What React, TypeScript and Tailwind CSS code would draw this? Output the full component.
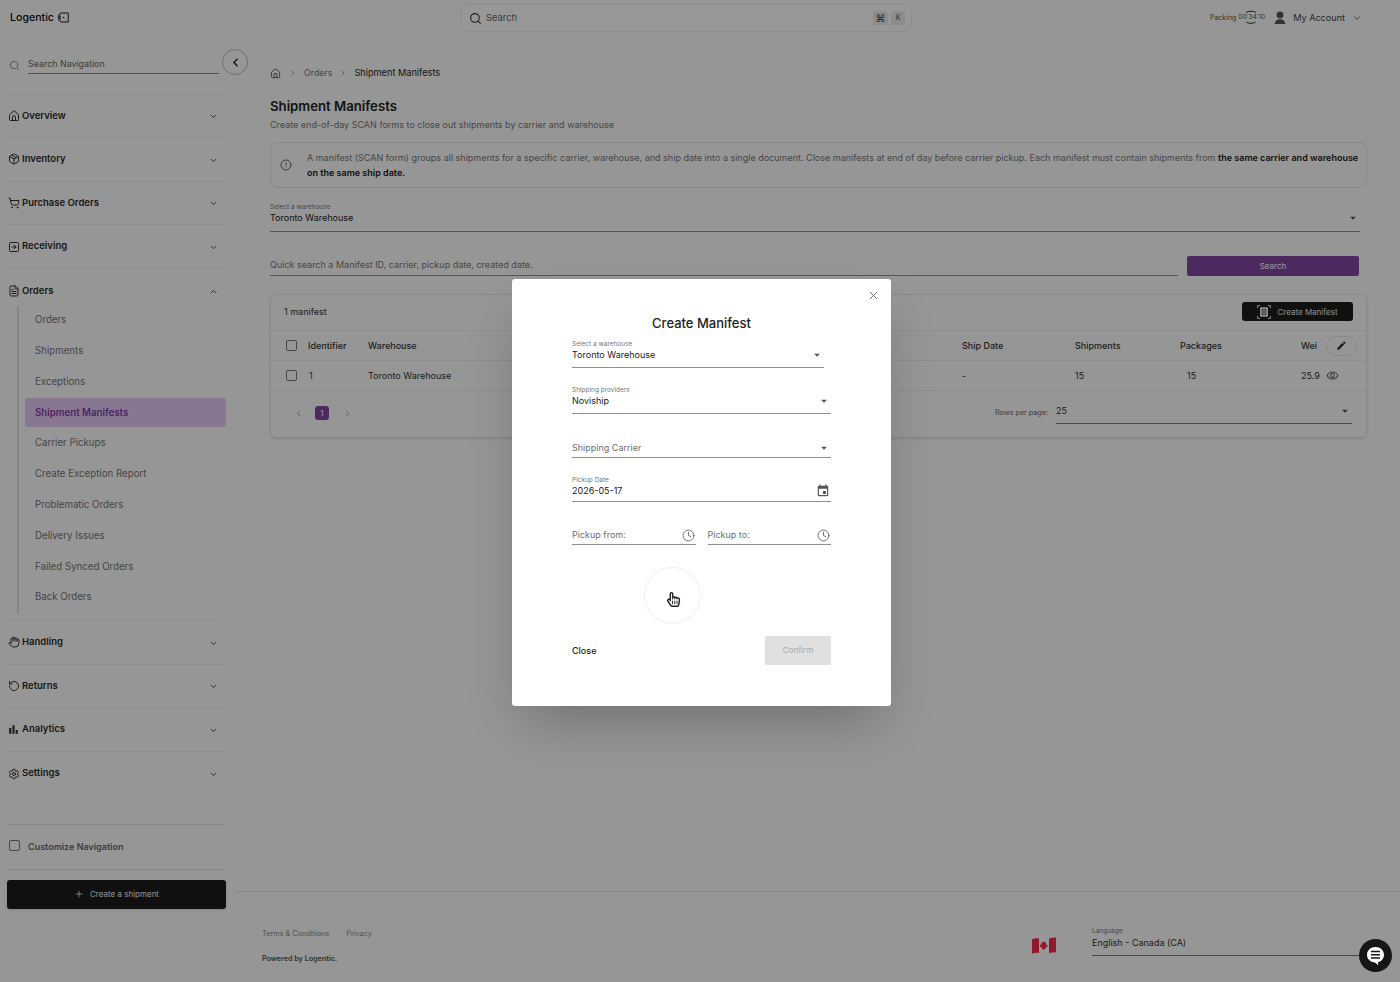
import React from "react";
import {
  Home, Package, ShoppingCart, SquareArrowRight, FileText, Hand, RotateCcw, Settings,
  ChevronDown, ChevronUp, ChevronLeft, ChevronRight, Search, CircleAlert, Clock, X, Plus,
} from "lucide-react";
import { MdArrowDropDown, MdEdit, MdEvent, MdOutlineRemoveRedEye, MdBarChart } from "react-icons/md";
import { FaRegHandPointer } from "react-icons/fa";

const subItems = ["Orders", "Shipments", "Exceptions", "Shipment Manifests", "Carrier Pickups", "Create Exception Report", "Problematic Orders", "Delivery Issues", "Failed Synced Orders", "Back Orders"];

function NavHead({ icon, label, open, last }: { icon: React.ReactNode; label: string; open?: boolean; last?: boolean }) {
  return (
    <div className={`h-[43.6px] ml-[7px] w-[219px] flex items-center pr-[8px] ${last ? "" : "border-b border-[#ececec]"}`}>
      <span className="w-[13px] flex justify-center text-[#333]">{icon}</span>
      <span className="ml-[2px] text-[9.500px] font-semibold text-[#2b2b2b]">{label}</span>
      <span className="ml-auto mt-[2px] text-[#444]">
        {open ? <ChevronUp size={9} strokeWidth={2.5} /> : <ChevronDown size={9} strokeWidth={2.5} />}
      </span>
    </div>
  );
}

function Box() {
  return <span className="block w-[11px] h-[11px] border-[1.5px] border-[#777] rounded-[2px]" />;
}

function Arrow() {
  return <MdArrowDropDown size={14} className="text-[#555]" />;
}

function Logo() {
  return (
    <svg width="11" height="11" viewBox="0 0 12 12" fill="none" stroke="#222" strokeWidth="1.1">
      <path d="M3.2 1h7.4c.4 0 .6.2.6.6v8.8c0 .4-.2.6-.6.6H3.2L.8 8.2V3.8L3.2 1z" />
      <circle cx="6" cy="6" r="0.9" fill="#222" stroke="none" />
      <path d="M3 4.2 1.4 6 3 7.800" />
    </svg>
  );
}

function Flag() {
  return (
    <svg width="24" height="17" viewBox="0 0 24 17">
      <path d="M0 2.2C3 1.2 5 .9 7 1.4v14.6c-2-.5-4-.2-7 .8V2.2z" fill="#f02a48" />
      <path d="M7 1.4c3.5.8 6.500 1 10 .1v14.6c-3.500.9-6.500.7-10-.1V1.4z" fill="#fff" />
      <path d="M17 1.500c2.500-.6 4.500-1 7-.9v14.600c-2.500-.1-4.500.3-7 .9V1.500z" fill="#f02a48" />
      <path d="M12 3.800l1 2 1.300-.4-.5 2.300 1.500-.300-.3 1.200 1 .7-2.800 1.800.3 1.200-1.500-.200V13.500h-.600v-1.400l-1.500.200.3-1.200-2.800-1.800 1-.7-.3-1.200 1.500.300-.5-2.300 1.300.4z" fill="#f02a48" />
    </svg>
  );
}

function ScanDoc() {
  return (
    <svg width="14" height="14" viewBox="0 0 14 14" fill="none" stroke="#e8e8e8" strokeWidth="1">
      <path d="M.6 3V.6H3M11 .6h2.400V3M13.400 11v2.400H11M3 13.400H.6V11" />
      <rect x="3" y="2.200" width="8" height="9.600" rx=".6" fill="#e8e8e8" stroke="none" />
      <path d="M4.500 4.800h5M4.500 7h5M4.500 9.200h5" stroke="#1b1b1b" strokeWidth=".8" />
    </svg>
  );
}

function ChatBubble() {
  return (
    <svg width="19" height="20" viewBox="0 0 19 20">
      <path d="M9.500 1C14.300 1 18 4.400 18 8.800c0 3.600-2.500 6.600-6 7.500l.3 3-3.400-2.800C4.300 16.300 1 13 1 8.800 1 4.400 4.700 1 9.500 1z" fill="#fff" />
      <path d="M5 5.500h9M5 8.800h9M5 12h9" stroke="#161616" strokeWidth="1.400" />
    </svg>
  );
}

function Person() {
  return (
    <svg width="12" height="13" viewBox="0 0 12 13" fill="#555">
      <circle cx="6" cy="4" r="3.400" />
      <path d="M.8 13c0-3 2.300-4.800 5.200-4.800s5.200 1.800 5.200 4.800H.8z" />
    </svg>
  );
}

function Field({ label, value, placeholder, right, className = "" }: { label?: string; value?: string; placeholder?: string; right?: React.ReactNode; className?: string }) {
  return (
    <div className={`border-b border-[#8f8f8f] ${className}`}>
      {label && <div className="text-[6.500px] leading-[11px] -mb-[2px] text-[#777]">{label}</div>}
      <div className="h-[14px] flex items-center justify-between">
        {value ? <span className="text-[9px] leading-[14px] text-[#222]">{value}</span> : <span className="text-[9px] leading-[14px] text-[#6f6f6f]">{placeholder}</span>}
        {right}
      </div>
    </div>
  );
}

export default function App() {
  return (
    <div className="relative w-[1400px] h-[982px] overflow-hidden bg-[#fafafa] flex flex-col font-['Inter',sans-serif] text-[#222]">
      <header className="h-[37px] shrink-0 flex items-center pl-[10px] pr-[38px] border-b border-[#f0f0f0]">
        <div className="w-[451px] flex items-center gap-[4px]">
          <span className="text-[10.600px] font-medium text-[#111]">Logentic</span>
          <Logo />
        </div>
        <div className="w-[451px] h-[28px] rounded-lg border border-[#ebebeb] bg-[#fcfcfc] flex items-center pl-[7px] pr-[6px]">
          <Search size={13} className="text-[#333]" />
          <span className="ml-[4px] text-[9.400px] text-[#666]">Search</span>
          <span className="ml-auto flex gap-[3px]">
            <span className="w-[15px] h-[14px] rounded-[3px] bg-[#e9e9e9] text-[10px] text-[#444] flex items-center justify-center">⌘</span>
            <span className="w-[14px] h-[14px] rounded-[3px] bg-[#e9e9e9] text-[7px] text-[#555] flex items-center justify-center">K</span>
          </span>
        </div>
        <div className="ml-auto flex items-center">
          <span className="text-[7px] text-[#555]">Packing</span>
          <span className="relative ml-[2px] text-[6.500px] text-[#555]">
            00:34:10
            <svg className="absolute left-[5px] -top-[4px]" width="16" height="16" viewBox="0 0 16 16" fill="none" stroke="#333" strokeWidth="1">
              <path d="M3 3.500C5 1.800 11 1.800 13 3.500M3.500 13C6 14.800 10 14.800 12.500 13" />
            </svg>
          </span>
          <span className="ml-[9px]"><Person /></span>
          <span className="ml-[7px] text-[9.100px] text-[#444]">My Account</span>
          <ChevronDown size={10} className="ml-[7px] text-[#555]" />
        </div>
      </header>

      <div className="flex flex-1 min-h-0">
        <aside className="w-[235px] shrink-0 border-r border-[#f2f2f2] flex flex-col relative">
          <div className="h-[56.500px] shrink-0 flex items-start pl-[9px] pr-[15px] pt-[20px]">
            <Search size={11} className="text-[#888] mt-[3px]" />
            <div className="ml-[8px] flex-1 border-b border-[#888] text-[8.900px] leading-[14px] text-[#666] pb-[2px]">Search Navigation</div>
          </div>
          <button className="absolute left-[222px] top-[12px] w-[26px] h-[26px] rounded-full border border-[#bbb] bg-[#fafafa] flex items-center justify-center">
            <ChevronLeft size={13} strokeWidth={2.500} className="text-[#222]" />
          </button>
          <div className="h-[1px] mx-[7px] bg-[#ececec]" />
          <div className="w-[226px]">
            <NavHead icon={<Home size={12} />} label="Overview" />
            <NavHead icon={<Package size={12} />} label="Inventory" />
            <NavHead icon={<ShoppingCart size={12} />} label="Purchase Orders" />
            <NavHead icon={<SquareArrowRight size={12} />} label="Receiving" />
            <NavHead icon={<FileText size={12} />} label="Orders" open last />
            <div className="ml-[17px] border-l-2 border-[#dcdcdc] pl-[6px] flex flex-col -mt-[6.500px]">
              {subItems.map((s) => (
                <div key={s} className={`h-[29px] mb-[1.800px] flex items-center pl-[10px] rounded-[3px] text-[9.700px] ${s === "Shipment Manifests" ? "bg-[#e5c5f2] text-[#7a3fa8] font-semibold" : "text-[#747474]"}`}>
                  {s}
                </div>
              ))}
            </div>
            <div className="h-[1px] mx-[7px] bg-[#ececec] mt-[6px]" />
            <NavHead icon={<Hand size={12} />} label="Handling" />
            <NavHead icon={<RotateCcw size={12} />} label="Returns" />
            <NavHead icon={<MdBarChart size={13} />} label="Analytics" />
            <NavHead icon={<Settings size={12} />} label="Settings" last />
          </div>
          <div className="mt-[29px] mx-[7px] border-t border-b border-[#dfdfdf] h-[46px] w-[219px] flex items-center pl-[2px]">
            <span className="-mt-[3px]"><Box /></span>
            <span className="ml-[8px] -mt-[2px] text-[9px] font-semibold text-[#666]">Customize Navigation</span>
          </div>
          <button className="mt-[10px] ml-[7px] w-[219px] h-[29px] pb-[1px] rounded-[3px] bg-[#1c1c1c] shadow flex items-center justify-center text-[8px] text-[#eee]">
            <Plus size={10} className="mr-[6px]" />Create a shipment
          </button>
        </aside>

        <main className="flex-1 min-w-0 flex flex-col">
          <div className="flex-1 min-h-0 pl-[35px] pr-[33px]">
            <div className="h-[16px] mt-[28px] flex items-center text-[9.200px]">
              <Home size={11} className="text-[#555]" />
              <ChevronRight size={8} className="mx-[7.500px] text-[#777]" />
              <span className="text-[8.800px] text-[#777]">Orders</span>
              <ChevronRight size={8} className="mx-[7px] text-[#777]" />
              <span className="text-[#222]">Shipment Manifests</span>
            </div>
            <h1 className="mt-[15px] text-[13.200px] leading-[20px] font-semibold text-[#222]">Shipment Manifests</h1>
            <p className="mt-[1px] text-[9px] leading-[16px] text-[#777]">Create end-of-day SCAN forms to close out shipments by carrier and warehouse</p>
            <div className="mt-[9px] h-[46px] rounded-lg border border-[#e3e3e3] flex items-center pl-[9px] pr-[2px]">
              <CircleAlert size={12} className="text-[#666] shrink-0" />
              <p className="ml-[15px] text-[9px] leading-[15px] text-[#777]">
                A manifest (SCAN form) groups all shipments for a specific carrier, warehouse, and ship date into a single document. Close manifests at end of day before carrier pickup. Each manifest must contain shipments from <b className="font-semibold text-[#222] whitespace-nowrap">the same carrier and warehouse</b><br /><b className="font-semibold text-[#222]">on the same ship date.</b>
              </p>
            </div>
            <div className="mt-[14px] mr-[7px]">
              <Field label="Select a warehouse" value="Toronto Warehouse" right={<Arrow />} className="pb-[6px]" />
            </div>
            <div className="mt-[24px] mr-[8px] flex items-end gap-[9px]">
              <div className="flex-1 border-b border-[#8f8f8f] text-[9px] leading-[14px] pb-[3px] text-[#777]">Quick search a Manifest ID, carrier, pickup date, created date.</div>
              <button className="w-[172px] h-[20px] rounded-[2px] bg-[#7f46a0] text-[8px] text-white">Search</button>
            </div>
            <section className="mt-[18px] h-[144px] rounded-md border border-[#e6e6e6] shadow-sm">
              <div className="h-[36px] pb-[2px] border-b border-[#ececec] flex items-center pl-[13px] pr-[13px] justify-between">
                <span className="text-[9px] text-[#333]">1 manifest</span>
                <button className="w-[111px] h-[19px] rounded-[3px] bg-[#1c1c1c] flex items-center justify-center gap-[6px] text-[8px] text-[#e8e8e8]">
                  <ScanDoc />Create Manifest
                </button>
              </div>
              <div className="h-[30px] border-b border-[#ececec] grid grid-cols-[37px_60px_594px_113px_105px_121px_1fr] items-center text-[9px] font-medium text-[#333]">
                <span className="pl-[15px]"><Box /></span>
                <span>Identifier</span>
                <span>Warehouse</span>
                <span>Ship Date</span>
                <span>Shipments</span>
                <span>Packages</span>
                <span className="flex items-center gap-[9px]">Wei
                  <span className="w-[31px] h-[20px] rounded-full border border-[#e3e3e3] flex items-center justify-center"><MdEdit size={11} className="text-[#333]" /></span>
                </span>
              </div>
              <div className="h-[30px] border-b border-[#ececec] grid grid-cols-[37px_60px_594px_113px_105px_121px_1fr] items-center text-[9px] text-[#333]">
                <span className="pl-[15px]"><Box /></span>
                <span className="pl-[1px]">1</span>
                <span>Toronto Warehouse</span>
                <span>-</span>
                <span>15</span>
                <span className="pl-[7px]">15</span>
                <span className="flex items-center gap-[6px]">25.9<MdOutlineRemoveRedEye size={13} className="text-[#666]" /></span>
              </div>
              <div className="h-[46px] pb-[2px] flex items-center pl-[23px] pr-[14px]">
                <ChevronLeft size={9} className="text-[#888]" />
                <span className="ml-[12px] w-[14px] h-[14px] rounded-[3px] bg-[#7f46a0] text-white text-[8px] flex items-center justify-center">1</span>
                <ChevronRight size={9} className="ml-[13.500px] text-[#888]" />
                <span className="ml-auto text-[7.200px] text-[#666]">Rows per page:</span>
                <div className="ml-[8px] mb-[3px] w-[296px] border-b border-[#777] flex items-center justify-between text-[9px] h-[24px] text-[#333]">
                  25<Arrow />
                </div>
              </div>
            </section>
          </div>
          <footer className="h-[91px] shrink-0 border-t border-[#e2e2e2] pl-[27px] pr-[40px] flex items-start justify-between">
            <div className="pt-[37px]">
              <div className="flex gap-[17px] text-[7.300px] leading-[10px] text-[#8a8a8a]"><span>Terms &amp; Conditions</span><span>Privacy</span></div>
              <div className="mt-[15px] text-[7.200px] leading-[10px] font-semibold text-[#555]">Powered by Logentic.</div>
            </div>
            <div className="pt-[35px] flex items-center">
              <span className="mt-[8px]"><Flag /></span>
              <div className="ml-[36px] w-[268px] border-b border-[#777] pb-[5px]">
                <div className="text-[6.500px] leading-[9px] text-[#777]">Language</div>
                <div className="text-[9px] leading-[14px] text-[#333]">English - Canada (CA)</div>
              </div>
            </div>
          </footer>
        </main>
      </div>

      {/* dimmed backdrop and dialog */}
      <div className="absolute inset-0 bg-black/40 flex items-start justify-start pt-[279px] pl-[512px]">
        <div className="relative w-[379px] h-[427px] rounded-[3px] bg-white shadow-2xl pl-[60px] pr-[60px]">
          <button className="absolute top-[10px] right-[11px] text-[#555]"><X size={13} strokeWidth={1.500} /></button>
          <h2 className="pt-[34px] text-center text-[13px] leading-[20px] font-medium text-[#222]">Create Manifest</h2>
          <div className="w-[252px] mt-[6px]"><Field label="Select a warehouse" value="Toronto Warehouse" right={<Arrow />} className="pb-[5px]" /></div>
          <div className="mt-[17px]"><Field label="Shipping providers" value="Noviship" right={<Arrow />} className="pb-[5px]" /></div>
          <div className="mt-[27px]"><Field placeholder="Shipping Carrier" right={<Arrow />} className="pb-[2px]" /></div>
          <div className="mt-[17px]">
            <Field label="Pickup Date" value="2026-05-17" right={<MdEvent size={14} className="text-[#555] mr-[1px]" />} className="pb-[3px]" />
          </div>
          <div className="mt-[26px] flex gap-[12px]">
            <div className="flex-1"><Field placeholder="Pickup from:" right={<Clock size={13} strokeWidth={1.500} className="text-[#555] mr-[1px]" />} className="pb-[2px]" /></div>
            <div className="flex-1"><Field placeholder="Pickup to:" right={<Clock size={13} strokeWidth={1.500} className="text-[#555] mr-[1px]" />} className="pb-[2px]" /></div>
          </div>
          <div className="relative h-[91px]">
            <span className="absolute left-[72px] top-[22px] w-[57px] h-[57px] rounded-full border border-[#eef1f1]" />
            <FaRegHandPointer size={15} className="absolute left-[94px] top-[47px] text-[#222]" />
          </div>
          <div className="flex items-center justify-between">
            <span className="text-[9px] font-medium text-[#222]">Close</span>
            <button className="w-[66px] h-[29px] pb-[2px] rounded-[2px] bg-[#e0e0e0] text-[8px] text-[#a8a8a8]">Confirm</button>
          </div>
        </div>
      </div>

      <button className="absolute left-[1359px] top-[939px] w-[33px] h-[33px] rounded-full bg-[#161616] flex items-center justify-center">
        <ChatBubble />
      </button>
    </div>
  );
}
